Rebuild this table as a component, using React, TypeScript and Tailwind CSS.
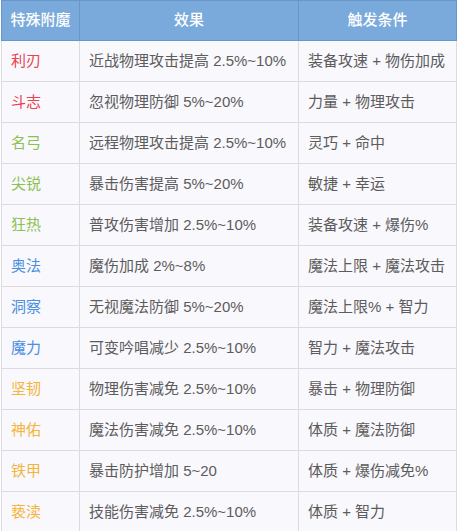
const rows: { name: string; color: string; effect: string; cond: string }[] = [
  { name: "利刃", color: "text-[#e8434f]", effect: "近战物理攻击提高 2.5%~10%", cond: "装备攻速 + 物伤加成" },
  { name: "斗志", color: "text-[#e8434f]", effect: "忽视物理防御 5%~20%", cond: "力量 + 物理攻击" },
  { name: "名弓", color: "text-[#8cc152]", effect: "远程物理攻击提高 2.5%~10%", cond: "灵巧 + 命中" },
  { name: "尖锐", color: "text-[#8cc152]", effect: "暴击伤害提高 5%~20%", cond: "敏捷 + 幸运" },
  { name: "狂热", color: "text-[#8cc152]", effect: "普攻伤害增加 2.5%~10%", cond: "装备攻速 + 爆伤%" },
  { name: "奥法", color: "text-[#4a8fe0]", effect: "魔伤加成 2%~8%", cond: "魔法上限 + 魔法攻击" },
  { name: "洞察", color: "text-[#4a8fe0]", effect: "无视魔法防御 5%~20%", cond: "魔法上限% + 智力" },
  { name: "魔力", color: "text-[#4a8fe0]", effect: "可变吟唱减少 2.5%~10%", cond: "智力 + 魔法攻击" },
  { name: "坚韧", color: "text-[#f5b43a]", effect: "物理伤害减免 2.5%~10%", cond: "暴击 + 物理防御" },
  { name: "神佑", color: "text-[#f5b43a]", effect: "魔法伤害减免 2.5%~10%", cond: "体质 + 魔法防御" },
  { name: "铁甲", color: "text-[#f5b43a]", effect: "暴击防护增加 5~20", cond: "体质 + 爆伤减免%" },
  { name: "亵渎", color: "text-[#f5b43a]", effect: "技能伤害减免 2.5%~10%", cond: "体质 + 智力" },
];

export default function App() {
  return (
    <div className="bg-white pl-px font-['Liberation_Sans','Noto_Sans_CJK_SC',sans-serif] text-[15px]">
      <table className="w-[455px] table-fixed border-collapse">
        <colgroup>
          <col className="w-[78px]" />
          <col className="w-[219px]" />
          <col className="w-[158px]" />
        </colgroup>
        <thead>
          <tr className="h-[40px] bg-[#7aaadc] text-white">
            <th className="border border-[#6996c8] text-center font-medium">特殊附魔</th>
            <th className="border border-[#6996c8] text-center font-medium">效果</th>
            <th className="border border-[#6996c8] text-center font-medium">触发条件</th>
          </tr>
        </thead>
        <tbody className="bg-[#f9f8fd] text-[#5c5c5c]">
          {rows.map((r) => (
            <tr key={r.name} className="h-[41px]">
              <td className={`border border-[#dcdce0] px-[9px] ${r.color}`}>{r.name}</td>
              <td className="border border-[#dcdce0] px-[9px]">{r.effect}</td>
              <td className="border border-[#dcdce0] px-[9px]">{r.cond}</td>
            </tr>
          ))}
        </tbody>
      </table>
    </div>
  );
}
